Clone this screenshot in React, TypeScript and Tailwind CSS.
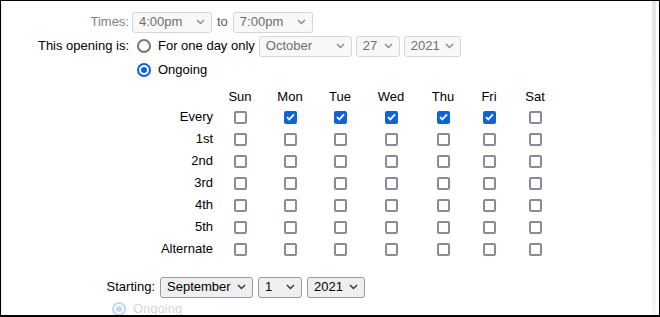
const days = ["Sun", "Mon", "Tue", "Wed", "Thu", "Fri", "Sat"];
const colWidths = "grid-cols-[214px_50px_50px_50px_52px_52px_40px_52px]";
const rows = ["Every", "1st", "2nd", "3rd", "4th", "5th", "Alternate"];
const everyChecked = [false, true, true, true, true, true, false];

function Chevron({ muted }: { muted?: boolean }) {
  return (
    <svg width="9" height="6" viewBox="0 0 9 6" className="shrink-0">
      <path d="M1 1l3.5 3.5L8 1" fill="none" stroke={muted ? "#8a8a8a" : "#333"} strokeWidth="1.4" />
    </svg>
  );
}

function Select({ value, w, disabled }: { value: string; w: string; disabled?: boolean }) {
  return (
    <div
      className={`${w} h-[21px] flex items-center justify-between pl-[6px] pr-[6px] rounded-[3px] border text-[13px] ${
        disabled ? "border-[#d6d6d6] bg-[#f8f8f8] text-[#6d6d6d]" : "border-[#9a9a9a] bg-[#efefef] text-black"
      }`}
    >
      <span>{value}</span>
      <Chevron muted={disabled} />
    </div>
  );
}

function Radio({ checked }: { checked?: boolean }) {
  return checked ? (
    <span className="block w-[14px] h-[14px] rounded-full border-2 border-[#0f62dc] flex items-center justify-center shrink-0">
      <span className="block w-[6px] h-[6px] rounded-full bg-[#0f62dc]" />
    </span>
  ) : (
    <span className="block w-[14px] h-[14px] rounded-full border-2 border-[#767676] shrink-0" />
  );
}

function Check({ checked }: { checked?: boolean }) {
  return checked ? (
    <span className="w-[13px] h-[13px] rounded-[2px] bg-[#0f62dc] flex items-center justify-center">
      <svg width="9" height="8" viewBox="0 0 9 8">
        <path d="M1 4.2l2.3 2.2L8 1.3" fill="none" stroke="white" strokeWidth="1.8" />
      </svg>
    </span>
  ) : (
    <span className="block w-[13px] h-[13px] rounded-[2px] border-2 border-[#8a8a98] bg-white" />
  );
}

export default function App() {
  return (
    <div className="w-[660px] h-[317px] flex border-t border-l border-r border-b-2 border-black bg-white overflow-hidden font-['Liberation_Sans',Arial,sans-serif] text-[13px] text-black">
      <div className="w-[3px] bg-gradient-to-r from-[#ecebf6] to-white shrink-0" />
      <div className="flex-1 flex flex-col pt-[9px] -ml-[3px]">
        <div className="flex items-center h-[24px] shrink-0">
          <span className="w-[128px] text-right text-[#808080]">Times:</span>
          <div className="ml-[3px]">
            <Select value="4:00pm" w="w-[80px]" disabled />
          </div>
          <span className="mx-[5px] text-[#5a5a5a]">to</span>
          <Select value="7:00pm" w="w-[80px]" disabled />
        </div>
        <div className="flex items-center h-[24px] shrink-0">
          <span className="w-[128px] text-right">This opening is:</span>
          <div className="ml-[8px]">
            <Radio />
          </div>
          <span className="ml-[7px]">For one day only</span>
          <div className="ml-[4px] flex gap-[4px]">
            <Select value="October" w="w-[93px]" disabled />
            <Select value="27" w="w-[44px]" disabled />
            <Select value="2021" w="w-[57px]" disabled />
          </div>
        </div>
        <div className="flex items-center h-[24px] shrink-0">
          <div className="ml-[136px]">
            <Radio checked />
          </div>
          <span className="ml-[7px]">Ongoing</span>
        </div>

        <div className={`grid ${colWidths} mt-[6px] shrink-0`}>
          <div className="h-[18px]" />
          {days.map((d) => (
            <div key={d} className="h-[18px] flex items-center justify-center">
              {d}
            </div>
          ))}
          {rows.map((r, ri) => (
            <div key={r} className="contents">
              <div className="h-[22px] flex items-center justify-end pr-[2px]">{r}</div>
              {days.map((d, di) => (
                <div key={d} className="h-[22px] flex items-center justify-center">
                  <Check checked={ri === 0 && everyChecked[di]} />
                </div>
              ))}
            </div>
          ))}
        </div>

        <div className="flex items-center h-[24px] mt-[15px] shrink-0">
          <span className="w-[154px] text-right">Starting:</span>
          <div className="ml-[5px] flex gap-[5px]">
            <Select value="September" w="w-[93px]" />
            <Select value="1" w="w-[44px]" />
            <Select value="2021" w="w-[58px]" />
          </div>
        </div>
        <div className="flex items-center h-[20px] shrink-0 opacity-25">
          <div className="ml-[111px]">
            <Radio checked />
          </div>
          <span className="ml-[7px] text-[#555]">Ongoing</span>
        </div>
      </div>
      <div className="w-[4px] bg-gradient-to-b from-[#e4e4e8] to-[#f4f4f6] shrink-0 mr-[3px]" />
    </div>
  );
}
